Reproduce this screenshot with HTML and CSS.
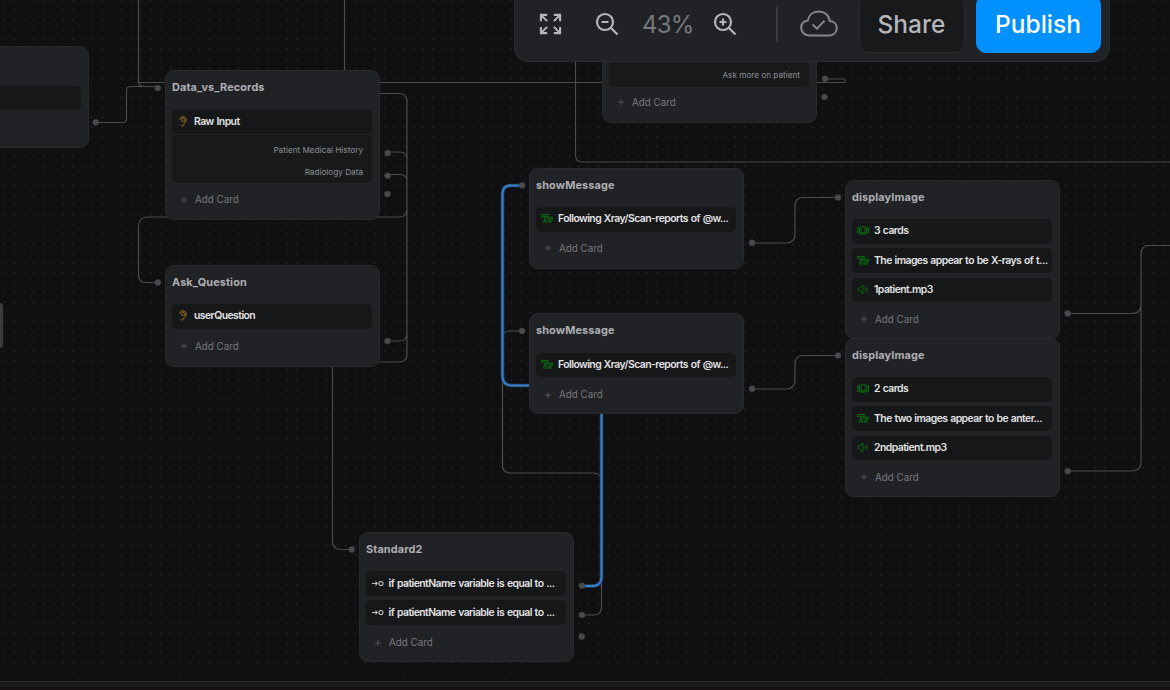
FILE: index.html
```html
<!DOCTYPE html>
<html lang="en">
<head>
<meta charset="utf-8">
<title>Flow editor</title>
<link rel="stylesheet" href="styles.css">
</head>
<body>
<svg class="sprite" aria-hidden="true">
  <symbol id="ear" viewBox="0 0 10 12"><path d="M1.600 4.200C1.600 2 3 .9 5 .9s3.500 1.300 3.500 3.400c0 1.700-.8 2.300-1.600 3.100-.9.800-.8 1.300-1.100 2.300-.4 1.300-2.300 1.800-3.300.4M3.300 4.500C3.300 3.200 3.900 2.500 5 2.500s1.900.8 1.900 1.800c0 1.300-.9 1.400-1.100 2.200M3.400 5.200c1.300-.6 2 .7 1 1.500"/></symbol>
  <symbol id="text" viewBox="0 0 12 10"><path d="M.5 3.200V1h6.800v2.200H6.200v-.7H4.900v5h.9v1.200H2.500V7.500h.8v-5H1.900v.7zM6.500 5.200V3.700h5V5.800h-.9V5.100H9.600v2.600h.7v1H7.500v-1h.7V5.100H7.400"/></symbol>
  <symbol id="cards" viewBox="0 0 12 10"><path d="M4 1.300h4.200v7.400H4zM4 7.300h4.200M2.700 2.200H.7v5.600h2M9.500 2.200h2v5.600h-2M2.400 2.200v5.600M9.800 2.200v5.600"/></symbol>
  <symbol id="audio" viewBox="0 0 12 12"><path d="M.8 4.300h1.800L5.900 1v10L2.600 7.700H.8zM7.900 4.200c.9 1 .9 2.600 0 3.600M9.500 2.800c1.700 1.900 1.700 4.500 0 6.400"/></symbol>
  <symbol id="cond" viewBox="0 0 12 8"><path d="M.8 4h5M4.100 2.300 5.800 4 4.100 5.700"/><circle cx="9.200" cy="4" r="1.900"/></symbol>
  <symbol id="plus" viewBox="0 0 8 8"><path d="M4 1v6M1 4h6"/></symbol>
</svg>

<main class="canvas">
  <svg class="edges" viewBox="0 0 1170 690">
    <path d="M138.500 0v82.500M344.500 0v72M138.500 82.500H845V79H825M138.500 82q0 4 6 4.500H157M96 122.500h26.500q4 0 4-4V90.500q0-4 4-4H157"/>
    <path d="M378 93.500h21q8 0 8 8V354q0 8-8 8h-21M388 152h12q7 0 7 7V209q0 8-8 8H148q-9.500 0-9.500 9.500V275q0 7.500 7.500 7.500h12M388 174.500h12q7 0 7 7V333q0 8-8 8h-11"/>
    <path d="M575.500 60v95q0 7 7 7H1170"/>
    <path d="M332.500 365V541q0 8.500 8.500 8.500h11M522 331h-12q-7.500 0-7.500 7.500V465q0 8 8 8H593q8.500 0 8.500 8V607q0 8-8 8h-12"/>
    <path d="M752 243h34q9 0 9-9V206q0-8.500 8.500-8.500H838M752 389h34q9 0 9-9V364q0-8.500 8.500-8.500H838"/>
    <path d="M1068 313.500h64q9 0 9-9M1068 471h64q9 0 9-9V254q0-8.500 8.500-8.500H1170"/>
    <path class="glow" d="M522 185.500h-11q-8.500 0-8.500 8.500V376q0 9.500 9.500 9.500h20M601.500 412V577q0 9-9 9H582"/>
    <path class="active" d="M522 185.500h-11q-8.500 0-8.500 8.500V376q0 9.500 9.500 9.500h20M601.500 412V577q0 9-9 9H582"/>
    <g class="ports">
      <circle cx="95.800" cy="122.300" r="3"/><circle cx="157.800" cy="88" r="3"/>
      <circle cx="387.700" cy="153" r="3"/><circle cx="387.700" cy="175.800" r="3"/><circle cx="387.500" cy="194" r="3"/>
      <circle cx="157.800" cy="282.500" r="3"/><circle cx="387.500" cy="341" r="3"/>
      <circle cx="825" cy="78.700" r="3"/><circle cx="824.500" cy="97" r="3"/>
      <circle cx="522" cy="185.300" r="3"/><circle cx="752" cy="242.800" r="3"/>
      <circle cx="522" cy="331" r="3"/><circle cx="752" cy="388.700" r="3"/>
      <circle cx="838" cy="197.500" r="3"/><circle cx="1067.700" cy="313.400" r="3"/>
      <circle cx="838" cy="355.400" r="3"/><circle cx="1067.700" cy="471.200" r="3"/>
      <circle cx="351.800" cy="549.500" r="3"/><circle cx="582" cy="585.700" r="3"/>
      <circle cx="582" cy="615" r="3"/><circle cx="581.800" cy="636.500" r="3"/>
    </g>
  </svg>

  <section class="node node-left"><div class="card"></div></section>

  <section class="node node-data">
    <h2 class="title">Data_vs_Records</h2>
    <div class="card-group">
      <div class="card"><svg class="icon ear"><use href="#ear"/></svg><span class="label">Raw Input</span></div>
      <ul class="outputs"><li>Patient Medical History</li><li>Radiology Data</li></ul>
    </div>
    <div class="add"><svg class="plus"><use href="#plus"/></svg>Add Card</div>
  </section>

  <section class="node node-ask">
    <h2 class="title">Ask_Question</h2>
    <div class="card"><svg class="icon ear"><use href="#ear"/></svg><span class="label">userQuestion</span></div>
    <div class="add"><svg class="plus"><use href="#plus"/></svg>Add Card</div>
  </section>

  <section class="node node-more">
    <div class="card-group"><ul class="outputs"><li>Ask more on patient</li></ul></div>
    <div class="add"><svg class="plus"><use href="#plus"/></svg>Add Card</div>
  </section>

  <section class="node node-msg1">
    <h2 class="title">showMessage</h2>
    <div class="card"><svg class="icon"><use href="#text"/></svg><span class="label">Following Xray/Scan-reports of @w...</span></div>
    <div class="add"><svg class="plus"><use href="#plus"/></svg>Add Card</div>
  </section>

  <section class="node node-msg2">
    <h2 class="title">showMessage</h2>
    <div class="card"><svg class="icon"><use href="#text"/></svg><span class="label">Following Xray/Scan-reports of @w...</span></div>
    <div class="add"><svg class="plus"><use href="#plus"/></svg>Add Card</div>
  </section>

  <section class="node node-img1">
    <h2 class="title">displayImage</h2>
    <div class="card"><svg class="icon"><use href="#cards"/></svg><span class="label">3 cards</span></div>
    <div class="card"><svg class="icon"><use href="#text"/></svg><span class="label">The images appear to be X-rays of t...</span></div>
    <div class="card"><svg class="icon"><use href="#audio"/></svg><span class="label">1patient.mp3</span></div>
    <div class="add"><svg class="plus"><use href="#plus"/></svg>Add Card</div>
  </section>

  <section class="node node-img2">
    <h2 class="title">displayImage</h2>
    <div class="card"><svg class="icon"><use href="#cards"/></svg><span class="label">2 cards</span></div>
    <div class="card"><svg class="icon"><use href="#text"/></svg><span class="label">The two images appear to be anter...</span></div>
    <div class="card"><svg class="icon"><use href="#audio"/></svg><span class="label">2ndpatient.mp3</span></div>
    <div class="add"><svg class="plus"><use href="#plus"/></svg>Add Card</div>
  </section>

  <section class="node node-std">
    <h2 class="title">Standard2</h2>
    <div class="card"><svg class="icon cond"><use href="#cond"/></svg><span class="label">if patientName variable is equal to ...</span></div>
    <div class="card"><svg class="icon cond"><use href="#cond"/></svg><span class="label">if patientName variable is equal to ...</span></div>
    <div class="add"><svg class="plus"><use href="#plus"/></svg>Add Card</div>
  </section>

  <div class="handle"></div>

  <nav class="toolbar">
    <svg class="tool expand" viewBox="0 0 24 24"><path d="M2 9V2.500h6.500M2.500 3l6 6M15.500 2.500H22V9M21.500 3l-6 6M2 15v6.500h6.500M2.500 21l6-6M22 15v6.500h-6.500M21.500 21l-6-6"/></svg>
    <svg class="tool" viewBox="0 0 24 24"><circle cx="10" cy="10" r="8"/><path d="M16 16l6.500 6.500M6.500 10h7"/></svg>
    <span class="zoom">43%</span>
    <svg class="tool" viewBox="0 0 24 24"><circle cx="10" cy="10" r="8"/><path d="M16 16l6.500 6.500M6.500 10h7M10 6.500v7"/></svg>
    <span class="divider"></span>
    <svg class="cloud" viewBox="0 0 38 28"><path d="M9.500 25.500C4.500 25.500 1.200 22 1.200 18c0-4 2.700-6.800 6.500-7.400C8.700 5 13 1.500 18.700 1.500c5.800 0 10.300 3.600 11 9.500 4.300.4 7.100 3.300 7.100 7.200 0 4.100-3.200 7.300-7.500 7.300zM12.500 14.500l4.500 4.200 7.500-8"/></svg>
    <button class="btn share">Share</button>
    <button class="btn publish">Publish</button>
  </nav>
  <footer class="bottom"></footer>
</main>
</body>
</html>
```

FILE: styles.css
```css
* { box-sizing: border-box; }
body { margin: 0; background: #101012; font-family: Inter, "Liberation Sans", sans-serif; }
.sprite { position: absolute; width: 0; height: 0; }
svg { fill: none; stroke: currentColor; flex: none; }
.canvas {
  position: relative; width: 1170px; height: 690px; overflow: hidden;
  background: radial-gradient(circle, #1d1d20 0.800px, transparent 1.300px) 0 -4.400px / 9.740px 9.740px, #101012;
}
.edges { position: absolute; inset: 0; width: 1170px; height: 690px; stroke: #4a4b4f; stroke-width: 1.200; }
.edges .active { stroke: #3a7fc8; stroke-width: 1.900; }
.edges .glow { stroke: #1f446b; stroke-width: 3.600; }
.ports { fill: #494b50; stroke: #3a3c40; stroke-width: 0.600; }

.node {
  position: absolute; width: 215px; padding: 0 7px 4px 6px; display: flex; flex-direction: column; gap: 4.700px;
  background: #212226; border: 1px solid #292a2e; border-radius: 9px;
}
.node-left { left: -126px; top: 46px; height: 102px; padding-top: 38.500px; }
.node-data { left: 165px; top: 70px; height: 150px; }
.node-ask { left: 165px; top: 265px; height: 102px; }
.node-more { left: 602px; top: 40px; height: 83px; padding-top: 20px; }
.node-msg1 { left: 529px; top: 168px; height: 101px; }
.node-msg2 { left: 529px; top: 313.400px; height: 101px; }
.node-img1 { left: 845px; top: 180px; height: 159px; }
.node-img2 { left: 845px; top: 338px; height: 159px; }
.node-std { left: 359px; top: 532px; height: 130px; }

.title { margin: 0; height: 33.500px; line-height: 33px; font-size: 10.900px; font-weight: 700; letter-spacing: 0.120px; color: #aeafb3; white-space: nowrap; }
.card { display: flex; align-items: center; gap: 4px; height: 24.600px; padding: 0 5px 1px; border-radius: 5px; background: #161719; flex: none; }
.label { padding-left: 1px; font-size: 10.400px; font-weight: 600; letter-spacing: -0.540px; word-spacing: 0.650px; color: #e2e2e4; white-space: nowrap; }
.icon { width: 12px; height: 11px; color: #087a10; stroke-width: 0.850; }
.icon.ear { color: #b87d14; stroke-width: 1; }
.icon.cond { width: 13px; color: #c4c5c8; stroke-width: 0.950; margin-right: -0.500px; }
.card-group { border-radius: 5px; background: #18191b; overflow: hidden; flex: none; }
.card-group .card { border-radius: 0; padding-bottom: 0; }
.node-std .card:nth-child(2), .node-std .card:nth-child(3) { padding-bottom: 0; }
.outputs { margin: 0; padding: 3px 9px 0 0; list-style: none; border-top: 1px solid #222326; text-align: right; font-size: 8.200px; color: #8e8f93; }
.outputs li { height: 22.700px; line-height: 24px; }
.node-more .outputs { padding-top: 2px; }
.node-more .outputs li { line-height: 23px; }
.add { display: flex; align-items: center; gap: 7px; height: 24px; padding: 0 0 0 8px; font-size: 9.800px; color: #77797e; }
.node-more .add { height: 22px; }
.node-ask .add, .node-msg2 .add, .node-std .add { padding-top: 1.500px; }
.plus { width: 8px; height: 8px; stroke-width: 0.800; color: #5f6166; }
.handle { position: absolute; left: -4px; top: 303px; width: 7px; height: 45px; border-radius: 3px; background: #3a3b3f; }

.toolbar {
  position: absolute; left: 514px; top: -14px; width: 596px; height: 76px; padding: 0 8px 0 23.500px;
  display: flex; align-items: center; background: #212226; border: 1px solid #2c2d31; border-radius: 14px; color: #b5b6ba;
}
.tool { width: 24px; height: 24px; stroke-width: 2.200; }
.expand { width: 23px; margin-right: 33px; }
.zoom { width: 46px; margin: 1px 24.500px 0 23.500px; font-size: 24px; line-height: 30px; letter-spacing: -0.800px; color: #77797e; white-space: nowrap; padding-top: 1px; }
.divider { width: 2px; height: 35px; margin: 0 22px 0 39px; background: #3b3c40; }
.cloud { width: 38px; height: 28px; color: #85868b; stroke-width: 2; margin-right: 21px; }
.btn { height: 58px; padding: 0; border: 1px solid #2a2b2f; border-radius: 10px; font: 500 24.500px Inter, sans-serif; flex: none; }
.share { width: 106px; margin-right: 11px; background: #18191b; color: #b5b6ba; }
.publish { width: 125px; border-color: #0090ff; background: #0090ff; color: #fff; }
.bottom { position: absolute; left: 0; right: 0; bottom: 0; height: 9px; background: #1a1a1c; border-top: 1px solid #2b2b2f; border-bottom: 3px solid #151012; }
```
